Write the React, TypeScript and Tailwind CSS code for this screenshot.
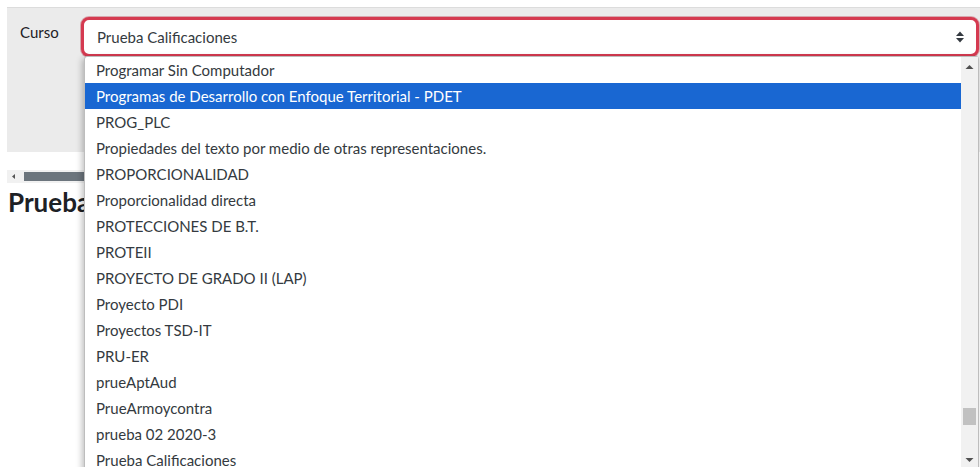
import React from "react";

const items = [
  "Programar Sin Computador",
  "Programas de Desarrollo con Enfoque Territorial - PDET",
  "PROG_PLC",
  "Propiedades del texto por medio de otras representaciones.",
  "PROPORCIONALIDAD",
  "Proporcionalidad directa",
  "PROTECCIONES DE B.T.",
  "PROTEII",
  "PROYECTO DE GRADO II (LAP)",
  "Proyecto PDI",
  "Proyectos TSD-IT",
  "PRU-ER",
  "prueAptAud",
  "PrueArmoycontra",
  "prueba 02 2020-3",
  "Prueba Calificaciones",
];

export default function App() {
  return (
    <div
      className="relative w-[980px] h-[467px] overflow-hidden bg-white text-[#1d2125]"
      style={{ fontFamily: "Lato, 'Open Sans', sans-serif" }}
    >
      <div className="pt-[7px] pl-[7px]">
        <div className="h-[145px] bg-[#ebebeb] border-t border-[#dcdcdc] flex pt-[14px] pl-[13px]">
          <div className="text-[15px] leading-[20px] w-[62px]">Curso</div>
        </div>
        <div className="mt-[18px] h-[13px] w-[77px] bg-[#f1f1f1] flex items-center">
          <svg width="14" height="13" viewBox="0 0 14 13" className="shrink-0">
            <path d="M5 6.5 L8 4 L8 9 Z" fill="#555" />
          </svg>
          <div className="h-[9px] flex-1 bg-[#6c757d] ml-[3px]" />
        </div>
        <div className="text-[26px] font-bold leading-[32px] mt-[3px] ml-[1px]">Prueba Calificaciones</div>
      </div>

      {/* select */}
      <div className="absolute left-[81px] top-[17px] w-[898px] h-[40px] rounded-[8px] border-[3px] border-[#d53a50] bg-white flex items-center pl-[13px] pr-[10px] shadow-[0_0_0_1px_rgba(180,40,60,0.35)]">
        <span className="text-[15px] text-[#343a40] flex-1">Prueba Calificaciones</span>
        <svg width="10" height="14" viewBox="0 0 10 14" className="mr-[1px]">
          <path d="M1 6 L5 1.5 L9 6 Z" fill="#343a40" />
          <path d="M1 8 L5 12.5 L9 8 Z" fill="#343a40" />
        </svg>
      </div>

      {/* dropdown list */}
      <div className="absolute left-[84px] top-[56px] w-[895px] h-[420px] bg-white border border-[#bdbdbd] rounded-[3px] shadow-[-2px_2px_6px_rgba(0,0,0,0.25)] flex">
        <div className="flex-1 flex flex-col">
          {items.map((t, i) => (
            <div
              key={i}
              className={
                "h-[26px] shrink-0 flex items-center pl-[11px] text-[15px] " +
                (i === 1 ? "bg-[#1967d2] text-white" : "text-[#343a40]")
              }
            >
              {t}
            </div>
          ))}
        </div>
        <div className="w-[17px] bg-[#f1f1f1] flex flex-col items-center relative">
          <svg width="9" height="6" viewBox="0 0 9 6" className="mt-[7px]">
            <path d="M0.5 5 L4.5 1 L8.5 5 Z" fill="#505050" />
          </svg>
          <div className="absolute left-[2px] top-[351px] w-[13px] h-[17px] bg-[#c1c1c1]" />
          <svg width="9" height="6" viewBox="0 0 9 6" className="absolute top-[400px] left-[4px]">
            <path d="M0.5 1 L4.5 5 L8.5 1 Z" fill="#505050" />
          </svg>
        </div>
      </div>
    </div>
  );
}
